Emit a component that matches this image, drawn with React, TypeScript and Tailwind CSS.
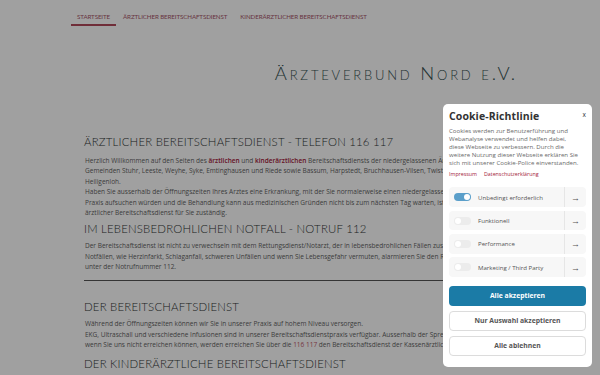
import React from "react";

const bodyFont = { fontFamily: '"Open Sans", "Liberation Sans", sans-serif' };

function Lines({ lines }: { lines: React.ReactNode[] }) {
  return (
    <div className="text-[6.5px] leading-[10.5px] text-[#5f5f5f] pl-[1px]" style={bodyFont}>
      {lines.map((l, i) => (
        <div key={i} className="whitespace-nowrap">{l}</div>
      ))}
    </div>
  );
}

function H({ children }: { children: React.ReactNode }) {
  return (
    <h2 className="h-[16px] leading-[16px] text-[11.4px] font-light uppercase tracking-[0.2px] text-[#2f3535] whitespace-nowrap font-['Lato',sans-serif]">
      {children}
    </h2>
  );
}

function Toggle({ on }: { on?: boolean }) {
  return (
    <div className={`w-[17px] h-[8px] rounded-full flex items-center px-[1px] ${on ? "bg-[#5b9fca] justify-end" : "bg-[#ececec] justify-start"}`}>
      <div className="w-[6px] h-[6px] rounded-full bg-white" />
    </div>
  );
}

function Row({ label, on }: { label: string; on?: boolean }) {
  return (
    <div className="h-[19.5px] rounded-[4px] bg-[#f7f7f7] flex items-center">
      <div className="flex-1 flex items-center gap-[7px] pl-[5px]">
        <Toggle on={on} />
        <span className="text-[6.1px] text-[#555]">{label}</span>
      </div>
      <div className="w-[22px] h-full border-l border-[#e6e6e6] flex items-center justify-center text-[9px] leading-[9px] text-[#555]">→</div>
    </div>
  );
}

export default function App() {
  return (
    <div className="relative w-[600px] h-[375px] overflow-hidden bg-white">
      <nav className="flex pl-[71px] pt-[11px] gap-[1px] text-[6.2px] uppercase text-[#a8566a] font-['Lato',sans-serif] tracking-[-0.1px]">
        <div className="px-[6px] h-[15px] leading-[11px] border-b-2 border-[#b34a5c]">Startseite</div>
        <div className="px-[6px] leading-[11px]">Ärztlicher Bereitschaftsdienst</div>
        <div className="px-[6px] leading-[11px]">Kinderärztlicher Bereitschaftsdienst</div>
      </nav>
      <div className="w-[432px] mx-auto">
        <div className="mt-[36px] flex justify-end">
          <h1 className="text-[18.5px] leading-[22px] font-light tracking-[2.8px] text-[#355050] font-['Lato',sans-serif] mr-[-2px]" style={{ fontVariant: "small-caps" }}>
            Ärzteverbund Nord e.V.
          </h1>
        </div>
        <div className="mt-[50px]">
          <H>Ärztlicher Bereitschaftsdienst - Telefon 116 117</H>
          <div className="mt-[5.75px]">
            <Lines
              lines={[
                <>Herzlich Willkommen auf den Seiten des <span className="text-[#a3203a] font-semibold">ärztlichen</span> und <span className="text-[#a3203a] font-semibold">kinderärztlichen</span> Bereitschaftsdiensts der niedergelassenen Ärzte der</>,
                "Gemeinden Stuhr, Leeste, Weyhe, Syke, Emtinghausen und Riede sowie Bassum, Harpstedt, Bruchhausen-Vilsen, Twistringen und",
                "Heiligenloh.",
                "Haben Sie ausserhalb der Öffnungszeiten Ihres Arztes eine Erkrankung, mit der Sie normalerweise einen niedergelassenen Arzt in seiner",
                "Praxis aufsuchen würden und die Behandlung kann aus medizinischen Gründen nicht bis zum nächsten Tag warten, ist der",
                "ärztlicher Bereitschaftsdienst für Sie zuständig.",
              ]}
            />
          </div>
          <div className="mt-[2px]">
            <H>Im lebensbedrohlichen Notfall - Notruf 112</H>
          </div>
          <div className="mt-[4.25px]">
            <Lines
              lines={[
                "Der Bereitschaftsdienst ist nicht zu verwechseln mit dem Rettungsdienst/Notarzt, der in lebensbedrohlichen Fällen zuständig ist. Bei",
                "Notfällen, wie Herzinfarkt, Schlaganfall, schweren Unfällen und wenn Sie Lebensgefahr vermuten, alarmieren Sie den Rettungsdienst",
                "unter der Notrufnummer 112.",
              ]}
            />
          </div>
          <hr className="mt-[7px] border-t border-[#555]" />
          <div className="mt-[18px]">
            <H>Der Bereitschaftsdienst</H>
          </div>
          <div className="mt-[4.75px]">
            <Lines
              lines={[
                "Während der Öffnungszeiten können wir Sie in unserer Praxis auf hohem Niveau versorgen.",
                "EKG, Ultraschall und verschiedene Infusionen sind in unserer Bereitschaftsdienstpraxis verfügbar. Ausserhalb der Sprechzeiten oder",
                <>wenn Sie uns nicht erreichen können, werden erreichen Sie über die <span className="text-[#c0566a]">116 117</span> den Bereitschaftsdienst der Kassenärztlichen Vereinigung.</>,
              ]}
            />
          </div>
          <div className="mt-[4.75px]">
            <H>Der kinderärztliche Bereitschaftsdienst</H>
          </div>
        </div>
      </div>

      <div className="absolute inset-0 bg-black/[0.373]" />

      <div className="absolute left-[443px] top-[104px] w-[149px] h-[263px] bg-white rounded-[5px] px-[6px] pt-[4px]" style={bodyFont}>
        <div className="flex items-start justify-between">
          <div className="text-[10.5px] leading-[16px] font-bold text-[#333] tracking-[0.1px]">Cookie-Richtlinie</div>
          <div className="text-[6.5px] leading-[10px] text-[#333] mt-[2px]">x</div>
        </div>
        <div className="mt-[3px] text-[6.1px] leading-[8.1px] text-[#6a6a6a]">
          <div className="whitespace-nowrap">Cookies werden zur Benutzerführung und</div>
          <div className="whitespace-nowrap">Webanalyse verwendet und helfen dabei,</div>
          <div className="whitespace-nowrap">diese Webseite zu verbessern. Durch die</div>
          <div className="whitespace-nowrap">weitere Nutzung dieser Webseite erklären Sie</div>
          <div className="whitespace-nowrap">sich mit unserer Cookie-Police einverstanden.</div>
        </div>
        <div className="mt-[3px] flex gap-[7px] text-[5.3px] leading-[8px] text-[#a3203a]">
          <span>Impressum</span>
          <span>Datenschutzerklärung</span>
        </div>
        <div className="mt-[9px] flex flex-col gap-[3.8px]">
          <Row label="Unbedingt erforderlich" on />
          <Row label="Funktionell" />
          <Row label="Performance" />
          <Row label="Marketing / Third Party" />
        </div>
        <div className="mt-[9px] flex flex-col gap-[5px]">
          <div className="h-[20px] rounded-[4px] bg-[#1b7ba6] text-white text-[6.8px] font-bold flex items-center justify-center">Alle akzeptieren</div>
          <div className="h-[20px] rounded-[4px] border border-[#dcdcdc] text-[#555] text-[6.8px] font-bold flex items-center justify-center">Nur Auswahl akzeptieren</div>
          <div className="h-[20px] rounded-[4px] border border-[#dcdcdc] text-[#555] text-[6.8px] font-bold flex items-center justify-center">Alle ablehnen</div>
        </div>
      </div>
    </div>
  );
}
